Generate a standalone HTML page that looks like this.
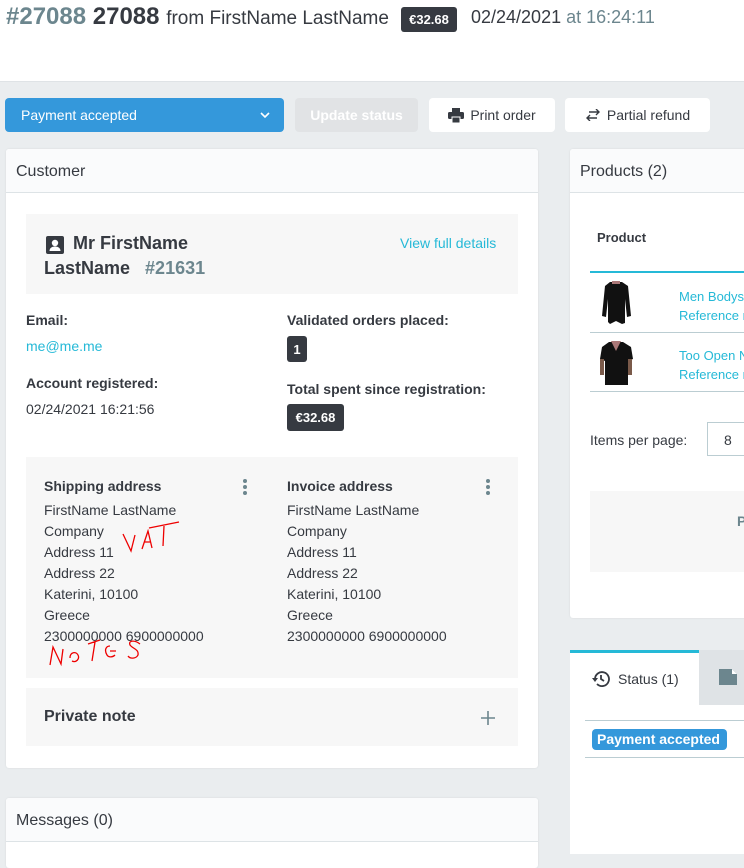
<!DOCTYPE html>
<html><head><meta charset="utf-8"><style>
*{box-sizing:border-box;margin:0;padding:0}
body{width:744px;height:854px;overflow:hidden;background:#eaedef;font-family:"Liberation Sans",sans-serif;color:#363a41;position:relative;font-size:14px}
.a{position:absolute}
.top{left:0;top:0;width:744px;height:82px;background:#fff;border-bottom:1px solid #dfe3e6}
.card{background:#fff;border-radius:3px;box-shadow:0 0 2px rgba(0,0,0,.08);overflow:hidden}
.ch{background:#fafbfc;border-bottom:1px solid #dde3e6;font-size:16px;padding:14px 10px 0;height:44px}
.box{background:#f7f7f7}
.btn{border-radius:4px;height:34px;font-size:14px;display:flex;align-items:center;justify-content:center}
.lbl{font-weight:bold;font-size:14px}
.dk{background:#363a41;color:#fff;border-radius:3px;font-weight:bold;font-size:13px;display:flex;align-items:center;justify-content:center}
.link{color:#25b9d7}
.addr{font-size:14px;line-height:21px}
</style></head><body>
<div class="a top"></div>
<div class="a" style="left:6px;top:3px;font-size:24px;white-space:nowrap"><b style="color:#6c868e">#27088</b> <b>27088</b> <span style="font-size:19px">from FirstName LastName</span></div>
<div class="a dk" style="left:401px;top:7px;width:56px;height:25px">€32.68</div>
<div class="a" style="left:471px;top:7px;font-size:18px;white-space:nowrap">02/24/2021 <span style="color:#6c868e">at 16:24:11</span></div>

<div class="a btn" style="left:5px;top:98px;width:279px;background:#3498db;color:#fff;justify-content:space-between;padding:0 14px 0 16px">Payment accepted<svg width="10" height="7" viewBox="0 0 10 7"><path d="M1 1l4 4 4-4" stroke="#fff" stroke-width="1.6" fill="none"/></svg></div>
<div class="a btn" style="left:295px;top:98px;width:123px;background:#e1e3e5;color:#fff;font-weight:bold">Update status</div>
<div class="a btn" style="left:429px;top:98px;width:126px;background:#fff"><svg width="16" height="15" viewBox="0 0 16 15" style="margin-right:6px"><rect x="4" y="0" width="8" height="4" fill="#363a41"/><rect x="0" y="4" width="16" height="7" rx="1.5" fill="#363a41"/><rect x="4" y="9" width="8" height="6" fill="#363a41" stroke="#fff" stroke-width="1"/></svg>Print order</div>
<div class="a btn" style="left:565px;top:98px;width:145px;background:#fff"><svg width="16" height="12" viewBox="0 0 16 12" style="margin-right:6px"><path d="M4 3h10M11 0l3 3-3 3M12 9H2M5 6l-3 3 3 3" stroke="#363a41" stroke-width="1.4" fill="none"/></svg>Partial refund</div>

<!-- customer card -->
<div class="a card" style="left:6px;top:149px;width:532px;height:619px">
<div class="ch">Customer</div>
</div>
<div class="a box" style="left:26px;top:214px;width:492px;height:80px"></div>
<svg class="a" style="left:46px;top:236px" width="18" height="18" viewBox="0 0 18 18"><rect width="18" height="18" rx="2" fill="#363a41"/><circle cx="9" cy="7" r="3.2" fill="#fff"/><path d="M3.5 15c0-3 2.5-4.5 5.5-4.5s5.5 1.5 5.5 4.5z" fill="#fff"/></svg>
<div class="a" style="left:73px;top:233px;font-size:18px;font-weight:bold">Mr FirstName</div>
<div class="a" style="left:44px;top:258px;font-size:18px;font-weight:bold">LastName <span style="color:#6c868e;margin-left:10px">#21631</span></div>
<div class="a link" style="left:400px;top:235px;font-size:14px">View full details</div>
<div class="a lbl" style="left:26px;top:312px">Email:</div>
<div class="a link" style="left:26px;top:338px">me@me.me</div>
<div class="a lbl" style="left:26px;top:375px">Account registered:</div>
<div class="a" style="left:26px;top:401px">02/24/2021 16:21:56</div>
<div class="a lbl" style="left:287px;top:312px">Validated orders placed:</div>
<div class="a dk" style="left:287px;top:336px;width:20px;height:26px">1</div>
<div class="a lbl" style="left:287px;top:381px">Total spent since registration:</div>
<div class="a dk" style="left:287px;top:404px;width:57px;height:27px">€32.68</div>

<div class="a box" style="left:26px;top:457px;width:492px;height:221px"></div>
<div class="a addr" style="left:44px;top:476px;line-height:21px"><b>Shipping address</b><div style="height:3px"></div>FirstName LastName<br>Company<br>Address 11<br>Address 22<br>Katerini, 10100<br>Greece<br>2300000000 6900000000</div>
<div class="a addr" style="left:287px;top:476px"><b>Invoice address</b><div style="height:3px"></div>FirstName LastName<br>Company<br>Address 11<br>Address 22<br>Katerini, 10100<br>Greece<br>2300000000 6900000000</div>
<svg class="a" style="left:242px;top:478px" width="6" height="18"><circle cx="3" cy="3" r="2" fill="#6c868e"/><circle cx="3" cy="9" r="2" fill="#6c868e"/><circle cx="3" cy="15" r="2" fill="#6c868e"/></svg>
<svg class="a" style="left:485px;top:478px" width="6" height="18"><circle cx="3" cy="3" r="2" fill="#6c868e"/><circle cx="3" cy="9" r="2" fill="#6c868e"/><circle cx="3" cy="15" r="2" fill="#6c868e"/></svg>
<svg class="a" style="left:46px;top:504px" width="150" height="170" viewBox="0 0 150 170"><g stroke="#e00" stroke-width="1.3" fill="none"><path d="M77 30l8 17 4-16M96 45l6-18 4 17M98 38h7M103 24l30-6M118 22l-1 20"/></g></svg>
<svg class="a" style="left:40px;top:520px" width="150" height="150" viewBox="0 0 150 150"><g stroke="#e00" stroke-width="1.3" fill="none"><path d="M10 145l3-18 8 17 2-15M30 138c0-6 6-7 8-3s-2 8-6 6M48 124l12-4M55 122l-3 19M70 126c-4 0-6 4-3 9 2 3 6 2 8 0M70 131h6M100 124c-5-4-12-4-10 1 3 4 9 4 8 10-2 4-8 4-10 1"/></g></svg>

<div class="a box" style="left:26px;top:688px;width:492px;height:58px"></div>
<div class="a" style="left:44px;top:708px;font-size:16px;font-weight:bold">Private note</div>
<svg class="a" style="left:481px;top:711px" width="14" height="14"><path d="M7 0v14M0 7h14" stroke="#6c868e" stroke-width="1.6"/></svg>

<div class="a card" style="left:6px;top:798px;width:532px;height:70px"><div class="ch">Messages (0)</div></div>

<!-- products -->
<div class="a card" style="left:570px;top:149px;width:180px;height:469px"><div class="ch">Products (2)</div></div>
<div class="a" style="left:597px;top:230px;font-size:13px;font-weight:bold">Product</div>
<div class="a" style="left:590px;top:271px;width:160px;height:2px;background:#25b9d7"></div>
<div class="a" style="left:590px;top:332px;width:160px;height:1px;background:#bbcdd2"></div>
<div class="a" style="left:590px;top:391px;width:160px;height:1px;background:#bbcdd2"></div>
<svg class="a" style="left:598px;top:280px" width="36" height="46" viewBox="0 0 36 46"><path d="M12 2h12l6 4 3 30-4 1-2-18v24l-3 1-6-3-6 3-2-2V19l-2 18-4-1 3-30z" fill="#111"/><path d="M14 1h8v3h-8z" fill="#a77"/></svg>
<svg class="a" style="left:598px;top:339px" width="36" height="46" viewBox="0 0 36 46"><path d="M11 3h14l8 5 2 12-5 2v24H7V22l-5-2 2-12z" fill="#111"/><path d="M13 2h10l-5 10z" fill="#a77"/><path d="M2 20h4v16h-4zM30 20h4v16h-4z" fill="#7a5a4a"/></svg>
<div class="a link" style="left:679px;top:287px;font-size:13px;line-height:19px;white-space:nowrap">Men Bodysuit<br>Reference n</div>
<div class="a link" style="left:679px;top:346px;font-size:13px;line-height:19px;white-space:nowrap">Too Open N<br>Reference n</div>
<div class="a" style="left:590px;top:432px;font-size:14px">Items per page:</div>
<div class="a" style="left:707px;top:422px;width:60px;height:34px;border:1px solid #bbcdd2;padding:9px 0 0 16px">8</div>
<div class="a box" style="left:590px;top:491px;width:160px;height:81px"></div>
<div class="a" style="left:737px;top:513px;font-weight:bold;color:#6c868e">P</div>

<!-- tabs -->
<div class="a" style="left:570px;top:650px;width:129px;height:56px;background:#fff;border-top:3px solid #25b9d7"></div>
<div class="a" style="left:699px;top:650px;width:45px;height:55px;background:#dfe3e6"></div>
<svg class="a" style="left:719px;top:669px" width="22" height="16"><path d="M0 0h13l5 5v11H0z" fill="#6c868e"/><path d="M13 0v5h5" fill="#fff"/></svg>
<div class="a" style="left:570px;top:705px;width:174px;height:149px;background:#fff"></div>
<svg class="a" style="left:592px;top:670px" width="18" height="18" viewBox="0 0 18 18"><g stroke="#363a41" stroke-width="1.8" fill="none"><path d="M3 9a7 7 0 1 1 2 5"/><path d="M9 5v4l3 2"/></g><path d="M0 8l3 4 3-4z" fill="#363a41"/></svg>
<div class="a" style="left:618px;top:671px;font-size:14px">Status (1)</div>
<div class="a" style="left:585px;top:720px;width:159px;height:1px;background:#bbcdd2"></div>
<div class="a" style="left:585px;top:757px;width:159px;height:1px;background:#bbcdd2"></div>
<div class="a" style="left:592px;top:729px;width:135px;height:21px;background:#3498db;border-radius:4px;color:#fff;font-weight:bold;font-size:14px;padding:2px 5px;white-space:nowrap">Payment accepted</div>
</body></html>
